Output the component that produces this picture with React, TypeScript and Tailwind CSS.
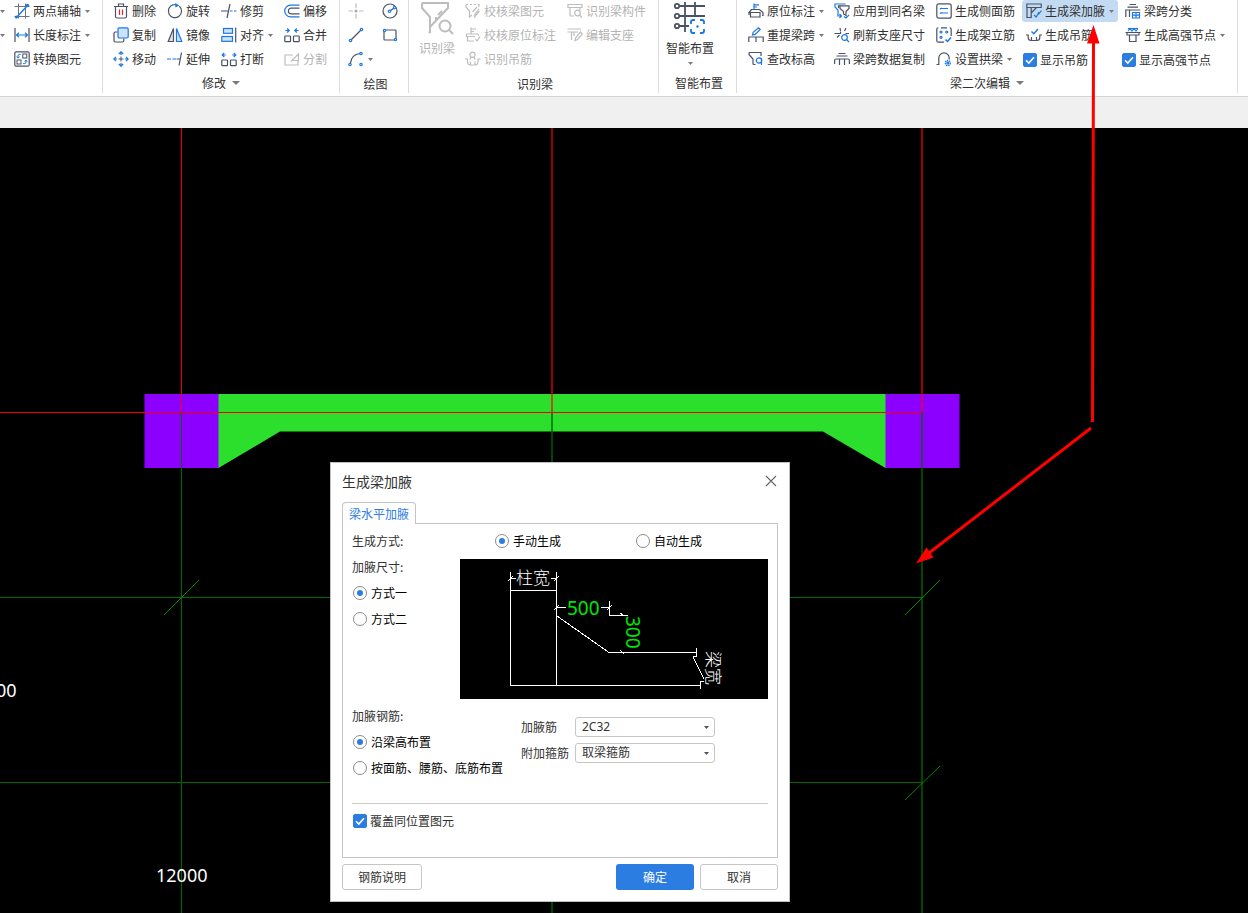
import { useState, type ReactNode } from "react";

const DARK = "#4b5266";
const BLUE = "#1a78e6";
const MUTED = "#bdbdbd";

/* ---------- icons ---------- */

function Icon({ children, color = DARK }: { children: ReactNode; color?: string }) {
  return (
    <svg className="size-4 shrink-0" viewBox="0 0 16 16" fill="none" stroke={color} strokeWidth="1.2" aria-hidden="true">
      {children}
    </svg>
  );
}

function Caret({ large = false }: { large?: boolean }) {
  return (
    <svg className={large ? "h-1 w-2 shrink-0" : "h-[3px] w-[5px] shrink-0"} viewBox="0 0 8 4" preserveAspectRatio="none" aria-hidden="true">
      <path d="M0 0H8L4 4Z" fill="#7b7b7b" />
    </svg>
  );
}

const icons = {
  twoPoint: (
    <Icon>
      <path d="M4.500 0.500V15.500M0.500 3.500H15.500M11.500 0.500V15.500M0.500 13.500H15.500" stroke="#6c7385" strokeWidth="1" />
      <path d="M2 15L14 2" stroke={BLUE} strokeWidth="1.4" />
      <circle cx="2.3" cy="14" r="1.5" fill={BLUE} stroke="none" />
      <circle cx="13.5" cy="2.3" r="1.6" fill={BLUE} stroke="none" />
    </Icon>
  ),
  lengthDim: (
    <Icon>
      <path d="M1 1V15M15 1V15" />
      <path d="M2.5 8H13.5M5 5.8L2.5 8L5 10.2M11 5.8L13.5 8L11 10.2" stroke={BLUE} />
    </Icon>
  ),
  convert: (
    <Icon>
      <rect x="0.8" y="0.8" width="14.4" height="14.4" rx="1.5" />
      <rect x="8.8" y="3" width="4" height="4" strokeWidth="1" />
      <rect x="3" y="9" width="4" height="4" strokeWidth="1" />
      <path d="M6.8 3.4H5.2Q4 3.4 4 5V7M2.6 5.6L4 7.2L5.4 5.6M9 12.6H10.8Q12 12.6 12 11V9.4M10.6 10.6L12 9L13.4 10.6" stroke={BLUE} strokeWidth="1" />
    </Icon>
  ),
  trash: (
    <Icon>
      <path d="M1 3.5H15M5.5 3.3V1H10.5V3.3M2.5 3.5V13.5Q2.5 15 4 15H12Q13.5 15 13.5 13.5V3.5" />
      <path d="M6.5 6.5V12M9.5 6.5V12" stroke="#e0242b" />
    </Icon>
  ),
  copy: (
    <Icon>
      <path d="M4.5 5H2.2Q1 5 1 6.2V13.8Q1 15 2.2 15H9.6Q10.8 15 10.8 13.8V11.5" />
      <rect x="5" y="0.8" width="10.2" height="10.2" rx="1.2" fill="#cfe2fb" stroke={BLUE} />
    </Icon>
  ),
  move: (
    <Icon>
      <path d="M8 5.5V10.5M5.5 8H10.5" strokeWidth="1" />
      <path d="M8 4V1M5.8 3L8 0.8L10.2 3M8 12V15M5.8 13L8 15.2L10.2 13M4 8H1M3 5.8L0.8 8L3 10.2M12 8H15M13 5.8L15.2 8L13 10.2" stroke={BLUE} />
    </Icon>
  ),
  rotate: (
    <Icon>
      <path d="M6 1.800A6.600 6.600 0 1 0 12.400 3.200" />
      <path d="M5.500 2Q7 1.400 9 1.600" stroke={BLUE} />
      <path d="M8.200 0L12.400 2.600L8.400 4.400Z" fill={BLUE} stroke="none" />
    </Icon>
  ),
  mirror: (
    <Icon>
      <path d="M6.5 1.5V14.5H1.2Z" fill="#dddfe4" />
      <path d="M9.5 1.5V14.5H14.8Z" fill="#cfe2fb" stroke={BLUE} />
    </Icon>
  ),
  extend: (
    <Icon>
      <path d="M0 8H4M5.5 8H9.5" stroke={BLUE} />
      <path d="M10 8H13M14.5 1.5L12 14.5" />
    </Icon>
  ),
  trim: (
    <Icon>
      <path d="M0 8H7M9 1L6 15" />
      <path d="M9 8H11.5M13 8H15.5" stroke={BLUE} />
    </Icon>
  ),
  align: (
    <Icon>
      <rect x="2.5" y="1.5" width="9" height="4.8" fill="#cfe2fb" stroke={BLUE} />
      <rect x="0.8" y="9.5" width="10.7" height="4.8" fill="#cfe2fb" stroke={BLUE} />
      <path d="M14.7 0.5V15.5" />
    </Icon>
  ),
  breakApart: (
    <Icon>
      <rect x="0.8" y="9" width="5.7" height="5.7" rx="0.6" />
      <rect x="9.5" y="9" width="5.7" height="5.7" rx="0.6" />
      <path d="M1.5 4H4.800M3.2 2L1.2 4L3.2 6M14.5 4H11.200M12.8 2L14.8 4L12.8 6" stroke={BLUE} />
    </Icon>
  ),
  offset: (
    <Icon>
      <path d="M15.5 2.2H6.5A5.8 5.8 0 0 0 6.5 13.8H15.5" stroke={BLUE} />
      <path d="M15.5 5.2H7.2A2.8 2.8 0 0 0 7.2 10.8H15.5" />
    </Icon>
  ),
  merge: (
    <Icon>
      <rect x="0.8" y="9" width="5.7" height="5.7" rx="0.6" />
      <rect x="9.5" y="9" width="5.7" height="5.7" rx="0.6" />
      <path d="M1.5 3.5H5M3.2 1.5L5.2 3.5L3.2 5.5M14.5 3.5H11M12.8 1.5L10.8 3.5L12.8 5.5" stroke={BLUE} />
    </Icon>
  ),
  split: (
    <Icon color={MUTED}>
      <path d="M9 4H1V14H14V10M7 10.5L14.500 3V9.500H8Z" />
    </Icon>
  ),
  point: (
    <Icon color={MUTED}>
      <path d="M8 0.5V5M8 11V15.5M0.5 8H5M11 8H15.5" />
      <circle cx="8" cy="8" r="1.5" fill="#a8a8a8" stroke="none" />
    </Icon>
  ),
  circle: (
    <Icon>
      <circle cx="8" cy="8" r="7" />
      <path d="M8 8L12 5" />
      <circle cx="7.5" cy="8.3" r="1.2" stroke={BLUE} fill="#fff" />
      <circle cx="12.6" cy="4.6" r="1.2" stroke={BLUE} fill="#fff" />
    </Icon>
  ),
  line: (
    <Icon>
      <path d="M3 13L13 3" />
      <circle cx="2.5" cy="13.5" r="1.2" stroke={BLUE} fill="#fff" />
      <circle cx="13.5" cy="2.5" r="1.2" stroke={BLUE} fill="#fff" />
    </Icon>
  ),
  rect: (
    <Icon>
      <rect x="2" y="3" width="12" height="10" rx="0.8" />
      <circle cx="2.5" cy="3.5" r="1.1" stroke={BLUE} fill="#fff" />
      <circle cx="13.5" cy="12.5" r="1.1" stroke={BLUE} fill="#fff" />
    </Icon>
  ),
  arc: (
    <Icon>
      <path d="M2.5 12Q3.5 3.5 12 2.5" />
      <circle cx="2" cy="13.5" r="1.2" stroke={BLUE} fill="#fff" />
      <circle cx="13" cy="2.5" r="1.2" stroke={BLUE} fill="#fff" />
      <circle cx="13" cy="13.5" r="1.2" stroke={BLUE} fill="#fff" />
    </Icon>
  ),
  checkBeam: (
    <Icon color={MUTED}>
      <path d="M1 1.5H3M5 1.5H7M9 1.5H11M12.5 1.5H14V4M1 1.5V4L4.5 8V14L7 12M12 4L7.5 9M14 6L9 12.5M9 14.5L14.5 8" />
    </Icon>
  ),
  checkOriginal: (
    <Icon color={MUTED}>
      <path d="M6 0.5V7M6 2H11M6 4.5H9M1.5 7H12.5L14 9M1.5 7V9.5H10M2.5 9.5V14H9M10.5 12L12 14L15 9.5" />
    </Icon>
  ),
  findHanger: (
    <Icon color={MUTED}>
      <circle cx="7.5" cy="3.800" r="2.6" />
      <path d="M5.8 6L5 8.500M9.200 6L10 8.500M0 8H2.500V10.5Q2.500 14 5.500 14H10Q13 14 13 10.5V8H15.5M5.500 10.500V14M10 10.500V14" />
    </Icon>
  ),
  findMember: (
    <Icon color={MUTED}>
      <path d="M1 1.5H15V4.5H1ZM3 4.5V12Q3 13 4 13H7M13 4.5V7" />
      <circle cx="10.5" cy="10" r="2.8" />
      <path d="M12.5 12L15 14.5" />
    </Icon>
  ),
  editSupport: (
    <Icon color={MUTED}>
      <path d="M0.5 2H14M0.5 5H11M4.5 5V13M8 13.5L8.5 11L13.5 5L15.5 7L10.5 12.5ZM7 5V9" />
    </Icon>
  ),
  originalMark: (
    <Icon>
      <path d="M6 0.5V6M6 1.8H11M6 4H9" stroke={BLUE} />
      <path d="M3.5 6.5H11.5L15 9.5V12.5H14M3.5 6.5L1 9.5H12V14H2.5V9.8M1 9.5V12" />
    </Icon>
  ),
  respan: (
    <Icon>
      <path d="M0.8 15V10H15.2V15M8 10.5V15" />
      <path d="M4.5 8L5.2 5.4L10.5 0.8L12.2 2.5L7.2 7.4Z" stroke={BLUE} />
    </Icon>
  ),
  elevation: (
    <Icon>
      <path d="M1 1.5H13V5M1 1.5V3.5L5 8V12.5Q5 13.5 6 13.5H7.5" />
      <circle cx="11" cy="9.5" r="2.7" stroke={BLUE} />
      <path d="M13.5 7V14" stroke={BLUE} />
    </Icon>
  ),
  applySame: (
    <Icon>
      <path d="M4.5 5V2.8H15V5.5L12 8.5V12.5L9.5 11V8.5L6 5.5V3" />
      <path d="M11.5 1H1V4L4 7V13H7.5M5.5 11L7.5 13L5.5 15M10 13.5L12 15L15 12" stroke={BLUE} />
    </Icon>
  ),
  refresh: (
    <Icon>
      <path d="M0.5 6.5H4.5M6 1L6.5 4M10.5 4L12 1M11.5 6.5H15M5.5 8L3 10.5M6.5 4.5V6.5H4.5" />
      <circle cx="10.5" cy="10.5" r="2.8" stroke={BLUE} />
      <path d="M12.5 12.5L15 15" stroke={BLUE} />
    </Icon>
  ),
  spanCopy: (
    <Icon>
      <path d="M4.500 2.5H11.500M2.500 5H13.500M0.600 13V9.500Q0.600 8 2 8H14Q15.400 8 15.400 9.500V13M5.500 8V14M10.500 8V14" />
    </Icon>
  ),
  sideBar: (
    <Icon>
      <rect x="0.8" y="0.8" width="14.4" height="14.4" rx="2" />
      <path d="M4 6Q5 5 6.5 5.5H12M4 10.5Q5 9.5 6.5 10H12" stroke={BLUE} />
    </Icon>
  ),
  erectBar: (
    <Icon>
      <path d="M8 15.2H2.3Q0.8 15.2 0.8 13.7V2.3Q0.8 0.8 2.3 0.8M5 0.8H11M13.7 0.8Q15.2 0.8 15.2 2.3V9" />
      <path d="M9.5 12.5L11.5 14.5L15 10.5" stroke={BLUE} strokeWidth="1.5" />
      <g stroke={BLUE}>
        <circle cx="5" cy="5" r="1" /><circle cx="10.8" cy="5" r="1" /><circle cx="5" cy="10.3" r="1" />
      </g>
    </Icon>
  ),
  arch: (
    <Icon>
      <path d="M0.5 13.5H3M2.8 14V7A5.2 5.2 0 0 1 13.2 7V8.5" />
      <circle cx="11.8" cy="12" r="2.6" stroke={BLUE} fill="#cfe2fb" strokeDasharray="1.4 0.8" />
      <circle cx="11.8" cy="12" r="0.8" stroke={BLUE} />
    </Icon>
  ),
  haunch: (
    <Icon>
      <path d="M0.8 1H15.2V4.5H0.8ZM1 4.5V14.5H5.2V4.5M5.2 10L10.5 4.5" />
      <path d="M8 12L10.2 14L13 9M12.5 11.5L15.5 7.5" stroke={BLUE} />
    </Icon>
  ),
  hanger: (
    <Icon>
      <path d="M0 8H2.2V10.5Q2.2 13.5 5 13.5H11Q13.8 13.5 13.8 10.5V8H16M5.5 10V13M10.5 10V13" />
      <path d="M5.5 4.5L7.8 6.8L12 2" stroke={BLUE} strokeWidth="1.4" />
    </Icon>
  ),
  classify: (
    <Icon>
      <path d="M4.5 1.5H11M2.5 4.2H13M0.8 14V7H15.2M4.5 7V14" />
      <path d="M7.5 9.5H14.5V15H7.5ZM11 9.5V15M7.5 12.2H14.5" stroke={BLUE} />
    </Icon>
  ),
  highNode: (
    <Icon>
      <path d="M0.5 5.5H15.5M2 5.5V8H14V5.5M4.5 8V14.5H11V8" />
      <path d="M3 1.5H13M3 4L5 1.5L7 4L9 1.5L11 4L13 1.5" stroke={BLUE} />
    </Icon>
  ),
};

/* ---------- ribbon parts ---------- */

function Tool({
  icon, label, caret, disabled, active, indent,
}: { icon: ReactNode; label?: string; caret?: boolean; disabled?: boolean; active?: boolean; indent?: boolean }) {
  return (
    <div className="flex h-6 items-center">
      <button
        type="button"
        disabled={disabled}
        aria-label={label ?? "绘图工具"}
        className={
          "flex h-[22px] items-center gap-[3px] whitespace-nowrap rounded-[3px] pr-1 " +
          (indent ? "pl-1 " : "") +
          (active ? "bg-[#c3daf3] " : "") +
          (disabled ? "text-[#b3b3b3]" : "text-[#303030]")
        }
      >
        {icon}
        {label && <span>{label}</span>}
        {caret && <span className="pl-px"><Caret /></span>}
      </button>
    </div>
  );
}

function Group({ title, caret, className, children }: { title: string; caret?: boolean; className: string; children: ReactNode }) {
  return (
    <section className={"flex shrink-0 flex-col border-r border-[#dcdcdc] " + className}>
      <div className="flex h-[72px]">{children}</div>
      <div className={"flex h-6 items-center justify-center gap-1.5 text-[#303030] " + (caret ? "pt-px" : "pl-[3px] pt-[3px]")}>
        <span>{title}</span>
        {caret && <Caret large />}
      </div>
    </section>
  );
}

function Column({ className, children }: { className: string; children: ReactNode }) {
  return <div className={"shrink-0 " + className}>{children}</div>;
}

function Check({ label, defaultChecked }: { label: string; defaultChecked?: boolean }) {
  return (
    <label className="flex h-6 items-center gap-[3px] whitespace-nowrap pl-px pt-px text-[#303030]">
      <span className="grid place-items-center">
        <input
          type="checkbox"
          defaultChecked={defaultChecked}
          className="peer col-start-1 row-start-1 size-3.5 appearance-none rounded-[2px] border border-[#8c8c8c] checked:border-[#2b7de1] checked:bg-[#2b7de1]"
        />
        <svg className="pointer-events-none col-start-1 row-start-1 hidden size-2.5 peer-checked:block" viewBox="0 0 10 10" fill="none" stroke="#fff" strokeWidth="1.6">
          <path d="M1 5.2L3.8 8L9 2.2" />
        </svg>
      </span>
      <span>{label}</span>
    </label>
  );
}

function Ribbon() {
  return (
    <header className="h-[97px] overflow-hidden border-b border-[#d4d4d4] bg-white">
      <div className="-mt-px flex h-[94px]">
        <Group title="" className="w-[103px]">
          <Column className="w-3.5">
            <div className="flex h-6 items-center"><Caret /></div>
            <div className="flex h-6 items-center"><Caret /></div>
          </Column>
          <Column className="w-20">
            <Tool icon={icons.twoPoint} label="两点辅轴" caret />
            <Tool icon={icons.lengthDim} label="长度标注" caret />
            <Tool icon={icons.convert} label="转换图元" />
          </Column>
        </Group>

        <Group title="修改" caret className="w-[237px]">
          <Column className="w-[64px] pl-2.5">
            <Tool icon={icons.trash} label="删除" />
            <Tool icon={icons.copy} label="复制" />
            <Tool icon={icons.move} label="移动" />
          </Column>
          <Column className="w-[54px]">
            <Tool icon={icons.rotate} label="旋转" />
            <Tool icon={icons.mirror} label="镜像" />
            <Tool icon={icons.extend} label="延伸" />
          </Column>
          <Column className="w-[63px]">
            <Tool icon={icons.trim} label="修剪" />
            <Tool icon={icons.align} label="对齐" caret />
            <Tool icon={icons.breakApart} label="打断" />
          </Column>
          <Column className="w-[50px]">
            <Tool icon={icons.offset} label="偏移" />
            <Tool icon={icons.merge} label="合并" />
            <Tool icon={icons.split} label="分割" disabled />
          </Column>
        </Group>

        <Group title="绘图" className="w-[69px]">
          <Column className="w-[42px] pl-2">
            <Tool icon={icons.point} disabled />
            <Tool icon={icons.line} />
            <Tool icon={icons.arc} caret />
          </Column>
          <Column className="w-5">
            <Tool icon={icons.circle} />
            <Tool icon={icons.rect} />
          </Column>
        </Group>

        <Group title="识别梁" className="w-[250px]">
          <Column className="w-14 pl-2.5">
            <button type="button" disabled className="flex flex-col items-center gap-[3px] pt-0.5 text-[#b3b3b3]">
              <svg className="size-9" viewBox="0 0 36 36" fill="none" stroke="#bdbdbd" strokeWidth="2">
                <path d="M3 2H29V7L11 26V31L10 32M3 2V7L11 16V31M19 14L23 10M17 16V20" />
                <circle cx="26" cy="25" r="5.5" />
                <path d="M30 29L34 33" />
              </svg>
              <span className="whitespace-nowrap leading-4">识别梁</span>
            </button>
          </Column>
          <Column className="w-[102px]">
            <Tool icon={icons.checkBeam} label="校核梁图元" disabled />
            <Tool icon={icons.checkOriginal} label="校核原位标注" disabled />
            <Tool icon={icons.findHanger} label="识别吊筋" disabled />
          </Column>
          <Column className="w-[84px]">
            <Tool icon={icons.findMember} label="识别梁构件" disabled />
            <Tool icon={icons.editSupport} label="编辑支座" disabled />
          </Column>
        </Group>

        <Group title="智能布置" className="w-[78px]">
          <Column className="pl-[7px]">
            <button type="button" className="flex flex-col items-center gap-[3px] pt-0.5 text-[#303030]">
              <svg className="size-9" viewBox="0 0 36 36" fill="none" stroke={DARK} strokeWidth="1.8">
                <path d="M7 5H33M7 15H33M7 25H17M13 1V31M23 1V15" />
                <g fill="#fff">
                  <circle cx="5" cy="5" r="2.2" /><circle cx="5" cy="15" r="2.2" /><circle cx="5" cy="25" r="2.2" />
                </g>
                <path d="M19 23V21Q19 19 21 19H23M28 19H30Q32 19 32 21V23M32 28V30Q32 32 30 32H28M23 32H21Q19 32 19 30V28" stroke={BLUE} />
                <circle cx="25.5" cy="25.5" r="1.2" fill={BLUE} stroke="none" />
              </svg>
              <span className="whitespace-nowrap pb-[3px] leading-4">智能布置</span>
              <Caret />
            </button>
          </Column>
        </Group>

        <Group title="梁二次编辑" caret className="w-[501px]">
          <Column className="w-[97px] pl-[11px]">
            <Tool icon={icons.originalMark} label="原位标注" caret />
            <Tool icon={icons.respan} label="重提梁跨" caret />
            <Tool icon={icons.elevation} label="查改标高" />
          </Column>
          <Column className="w-[102px]">
            <Tool icon={icons.applySame} label="应用到同名梁" />
            <Tool icon={icons.refresh} label="刷新支座尺寸" />
            <Tool icon={icons.spanCopy} label="梁跨数据复制" />
          </Column>
          <Column className="w-[86px]">
            <Tool icon={icons.sideBar} label="生成侧面筋" />
            <Tool icon={icons.erectBar} label="生成架立筋" />
            <Tool icon={icons.arch} label="设置拱梁" caret />
          </Column>
          <Column className="w-[99px]">
            <Tool icon={icons.haunch} label="生成梁加腋" caret active indent />
            <Tool icon={icons.hanger} label="生成吊筋" indent />
            <Check label="显示吊筋" defaultChecked />
          </Column>
          <Column className="w-[110px]">
            <Tool icon={icons.classify} label="梁跨分类" indent />
            <Tool icon={icons.highNode} label="生成高强节点" caret indent />
            <Check label="显示高强节点" defaultChecked />
          </Column>
        </Group>
      </div>
    </header>
  );
}

/* ---------- drawing canvas ---------- */

function Drawing() {
  return (
    <svg className="absolute inset-0 size-full" aria-hidden="true">
      <rect x="144.500" y="266" width="74.500" height="74" fill="#8b00ff" />
      <rect x="885" y="266" width="74.500" height="74" fill="#8b00ff" />
      <path d="M218.500 266H885.500V340L823 303.500H280L218.500 340Z" fill="#2ddf2d" />
      <g fill="none" shapeRendering="crispEdges">
        <path d="M181.500 0V284" stroke="#f00000" />
        <path d="M181.500 284V785" stroke="#006a00" />
        <path d="M552 0V284M922 0V284" stroke="#ff0000" strokeOpacity="0.6" strokeWidth="2" />
        <path d="M552 284V785M922 284V785" stroke="#006400" strokeOpacity="0.7" strokeWidth="2" />
        <path d="M0 284.500H922" stroke="#f00000" />
        <path d="M0 469.500H922M0 654.500H922" stroke="#006a00" />
      </g>
      <path d="M164 487L199 452M905 487L940 452M905 672L940 638" stroke="#008a00" />
      <g fill="#fff" className="font-['Noto_Sans',sans-serif] text-[18px]">
        <text x="156" y="754">12000</text>
        <text x="-35" y="569">12000</text>
      </g>
    </svg>
  );
}

function HaunchPreview() {
  return (
    <svg className="h-[140px] w-[308px] shrink-0 bg-black" viewBox="0 0 308 140" fill="none" stroke="#fff" role="img" aria-label="加腋尺寸示意图">
      <g shapeRendering="crispEdges">
        <path d="M50.500 13V126.500H240.500M96.500 13V126.500M50 31.500H97M51 19.500H56M91 19.500H96" />
        <path d="M97 48.500H106M141 48.500H149M149.500 42V56.500H168M149 93.500H236.500M236.500 89V97.500H233M244 122.500H240.500V130" />
        <path d="M97 57L149 93.500M233 98L244 120M48 22L53 17M94 22L99 17M94 51L99 46M147 51L152 46M160 54L164 57M160 91L164 95" />
      </g>
      <g stroke="none" fill="#fff" className="font-['Noto_Sans_CJK_SC',sans-serif] text-[17px] font-light">
        <text x="56" y="25">柱宽</text>
        <text transform="translate(247 92) rotate(90)">梁宽</text>
      </g>
      <g stroke="none" fill="#00e600" className="font-['Noto_Sans',sans-serif] text-[19px]">
        <text x="107" y="56">500</text>
        <text transform="translate(166 57) rotate(90)">300</text>
      </g>
    </svg>
  );
}

/* ---------- dialog ---------- */

function Radio({ name, label, checked, onChange }: { name: string; label: string; checked: boolean; onChange: () => void }) {
  return (
    <label className="flex h-[26px] items-center gap-1 whitespace-nowrap pl-px text-black">
      <span className="grid place-items-center">
        <input
          type="radio"
          name={name}
          checked={checked}
          onChange={onChange}
          className="peer col-start-1 row-start-1 size-3.5 appearance-none rounded-full border border-[#8c8c8c] bg-white"
        />
        <span className="pointer-events-none col-start-1 row-start-1 hidden size-1.5 rounded-full bg-[#2b7de1] peer-checked:block" />
      </span>
      <span>{label}</span>
    </label>
  );
}

function Field({ id, label, options }: { id: string; label: string; options: string[] }) {
  return (
    <div className="flex h-[26px] items-center">
      <label htmlFor={id} className="w-[54px] whitespace-nowrap">{label}</label>
      <div className="grid items-center">
        <select
          id={id}
          className="col-start-1 row-start-1 h-5 w-[140px] appearance-none rounded-[3px] border border-[#c6c6c6] bg-white px-1.5 font-['Noto_Sans','Noto_Sans_CJK_SC',sans-serif] leading-[18px]"
        >
          {options.map((o) => <option key={o}>{o}</option>)}
        </select>
        <svg className="pointer-events-none col-start-1 row-start-1 mr-1.5 h-[3px] w-[5px] justify-self-end" viewBox="0 0 5 3">
          <path d="M0 0H5L2.500 3Z" fill="#4b5266" />
        </svg>
      </div>
    </div>
  );
}

function HaunchDialog() {
  const [mode, setMode] = useState("manual");
  const [size, setSize] = useState("one");
  const [rebar, setRebar] = useState("height");
  return (
    <div role="dialog" aria-label="生成梁加腋" className="absolute left-[330px] top-[334px] w-[460px] border border-[#bfc1c4] bg-white px-[11px] pb-[11px] text-[#333]">
      <div className="mb-[3px] flex h-9 items-center justify-between">
        <h1 className="text-sm">生成梁加腋</h1>
        <button type="button" aria-label="关闭" className="pr-px">
          <svg className="size-3" viewBox="0 0 12 12" stroke="#666" strokeWidth="1.1"><path d="M1 1L11 11M11 1L1 11" /></svg>
        </button>
      </div>
      <div role="tablist" className="flex">
        <button type="button" role="tab" aria-selected="true" className="relative z-10 -mb-px h-[22px] rounded-t-[4px] border border-b-0 border-[#c3c5c9] bg-white px-1.5 text-[#2b7de1]">
          梁水平加腋
        </button>
      </div>
      <div className="h-[335px] border border-[#c3c5c9] px-[9px] pt-1">
        <div className="flex h-[26px] items-center">
          <span className="w-[142px]">生成方式:</span>
          <div className="w-[141px]"><Radio name="mode" label="手动生成" checked={mode === "manual"} onChange={() => setMode("manual")} /></div>
          <Radio name="mode" label="自动生成" checked={mode === "auto"} onChange={() => setMode("auto")} />
        </div>
        <div className="flex">
          <div className="w-[108px]">
            <div className="flex h-[26px] items-center">加腋尺寸:</div>
            <Radio name="size" label="方式一" checked={size === "one"} onChange={() => setSize("one")} />
            <Radio name="size" label="方式二" checked={size === "two"} onChange={() => setSize("two")} />
          </div>
          <div className="pt-[5px]"><HaunchPreview /></div>
        </div>
        <div className="flex border-b border-[#cacaca] pb-[22px] pt-1">
          <div className="w-[169px]">
            <div className="flex h-[26px] items-center">加腋钢筋:</div>
            <Radio name="rebar" label="沿梁高布置" checked={rebar === "height"} onChange={() => setRebar("height")} />
            <Radio name="rebar" label="按面筋、腰筋、底筋布置" checked={rebar === "faces"} onChange={() => setRebar("faces")} />
          </div>
          <div className="pt-[11px]">
            <Field id="haunch-bar" label="加腋筋" options={["2C32"]} />
            <Field id="extra-stirrup" label="附加箍筋" options={["取梁箍筋"]} />
          </div>
        </div>
        <div className="pt-1"><Check label="覆盖同位置图元" defaultChecked /></div>
      </div>
      <div className="flex gap-1.5 pt-1.5">
        <button type="button" className="mr-auto h-[26px] w-20 rounded-[3px] border border-[#c6c6c6]">钢筋说明</button>
        <button type="button" className="h-[26px] w-[78px] rounded-[3px] bg-[#2b7de1] text-white">确定</button>
        <button type="button" className="h-[26px] w-[78px] rounded-[3px] border border-[#c6c6c6]">取消</button>
      </div>
    </div>
  );
}

export default function App() {
  return (
    <div className="relative flex min-h-screen flex-col overflow-hidden bg-black font-['Noto_Sans_CJK_SC','Noto_Sans',sans-serif] text-xs">
      <Ribbon />
      <div className="h-[31px] shrink-0 bg-[#f0f0f0]" />
      <main className="relative min-h-[785px] flex-1">
        <Drawing />
        <HaunchDialog />
      </main>
      <svg className="pointer-events-none absolute inset-0 size-full" aria-hidden="true">
        <path d="M1093.500 42L1092.500 422M1091 428L929 553" stroke="#f00" strokeWidth="3" />
        <path d="M1093.500 25L1099.500 43.500H1087ZM916 563.500L926.500 547.500L933.500 557.500Z" fill="#f00" />
      </svg>
    </div>
  );
}
